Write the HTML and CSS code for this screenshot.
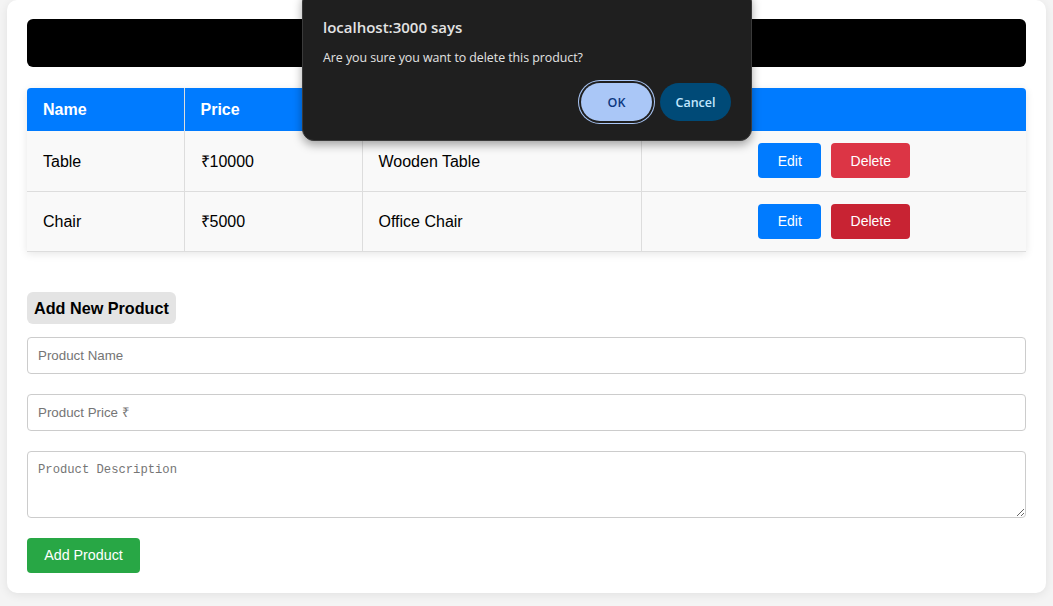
FILE: index.html
```html
<!DOCTYPE html>
<html lang="en">
<head>
<meta charset="utf-8">
<title>Products</title>
<link rel="stylesheet" href="styles.css">
</head>
<body>
<div class="page">
  <div class="container">
    <div class="topbar"></div>
    <table class="products">
      <thead>
        <tr>
          <th class="c-name">Name</th>
          <th class="c-price">Price</th>
          <th class="c-desc">Description</th>
          <th class="c-act">Actions</th>
        </tr>
      </thead>
      <tbody>
        <tr>
          <td>Table</td>
          <td>₹10000</td>
          <td>Wooden Table</td>
          <td class="actions"><button class="btn edit">Edit</button><button class="btn delete">Delete</button></td>
        </tr>
        <tr>
          <td>Chair</td>
          <td>₹5000</td>
          <td>Office Chair</td>
          <td class="actions"><button class="btn edit">Edit</button><button class="btn delete hover">Delete</button></td>
        </tr>
      </tbody>
    </table>

    <div class="form">
      <h2 class="form-title">Add New Product</h2>
      <input class="field" type="text" placeholder="Product Name">
      <input class="field" type="text" placeholder="Product Price ₹">
      <textarea class="field area" placeholder="Product Description"></textarea>
      <div><button class="btn add">Add Product</button></div>
    </div>
  </div>

  <div class="dialog">
    <div class="dlg-title">localhost:3000 says</div>
    <div class="dlg-msg">Are you sure you want to delete this product?</div>
    <div class="dlg-actions">
      <button class="dlg-btn ok">OK</button>
      <button class="dlg-btn cancel">Cancel</button>
    </div>
  </div>
</div>
</body>
</html>
```

FILE: styles.css
```css
* { box-sizing: border-box; }
html, body {
  margin: 0;
  padding: 0;
  background: #f4f4f4;
  font-family: "Liberation Sans", Arial, sans-serif;
}
.page {
  position: relative;
  padding: 0 7px 13px 7px;
}
.container {
  background: #ffffff;
  border-radius: 10px;
  box-shadow: 0 2px 10px rgba(0,0,0,0.08);
  padding: 19px 20px 20px 20px;
  height: 593px;
}
.topbar {
  height: 48px;
  background: #000;
  border-radius: 6px;
}
.products {
  margin-top: 21px;
  width: 100%;
  border-collapse: collapse;
  border-radius: 4px 4px 0 0;
  overflow: hidden;
  box-shadow: 0 2px 8px rgba(0,0,0,0.1);
  font-size: 16px;
}
.products th {
  background: #007bff;
  color: #fff;
  font-weight: bold;
  text-align: left;
  height: 43px;
  padding: 1px 16px 0 16px;
  border-right: 1px solid #ddd;
}
.products th:last-child { border-right: none; }
.c-name { width: 157px; }
.c-price { width: 178px; }
.c-desc { width: 279px; }
.products td {
  background: #f9f9f9;
  color: #000;
  height: 60px;
  line-height: 18px;
  padding: 2px 15px 0 16px;
  border: 1px solid #ddd;
  border-top: none;
}
.products tr td:first-child { border-left: none; }
.products tr td:last-child { border-right: none; }
.products td.actions { text-align: center; padding-top: 0; }
.btn {
  font-family: "Liberation Sans", Arial, sans-serif;
  font-size: 14px;
  color: #fff;
  border: none;
  border-radius: 4px;
  height: 35px;
  padding: 0 20px;
  vertical-align: middle;
}
.edit { background: #007bff; width: 63px; padding: 0; }
.delete { background: #dc3545; width: 79px; padding: 0; margin-left: 10px; }
.delete.hover { background: #c82333; }

.form { margin-top: 40px; }
.form-title {
  display: inline-block;
  margin: 0;
  font-size: 16.2px;
  font-weight: bold;
  background: #e4e4e4;
  border-radius: 6px;
  padding: 7px 7px;
  line-height: 18px;
  color: #000;
}
.field {
  display: block;
  width: 100%;
  height: 37px;
  margin-top: 13px;
  border: 1px solid #ccc;
  border-radius: 4px;
  padding: 0 10px;
  font-family: "Liberation Sans", Arial, sans-serif;
  font-size: 13.33px;
  background: #fff;
}
.field + .field { margin-top: 20px; }
.field::placeholder { color: #757575; }
.area {
  height: 67px;
  padding: 11px 10px;
  font-family: "Liberation Mono", monospace;
  font-size: 12.2px;
  resize: vertical;
}
.add {
  margin-top: 20px;
  background: #28a745;
  width: 113px;
  padding: 0;
  font-size: 14.3px;
}

.dialog {
  position: absolute;
  left: 302px;
  top: -10px;
  width: 450px;
  height: 151px;
  background: #1f1f1f;
  border: 1px solid #3a3a3a;
  border-radius: 12px;
  box-shadow: 0 4px 10px rgba(0,0,0,0.35);
  padding: 26px 20px 0 20px;
  font-family: "Open Sans", "Noto Sans", sans-serif;
  color: #e3e3e3;
}
.dlg-title {
  font-size: 15px;
  font-weight: 600;
  line-height: 20px;
}
.dlg-msg {
  font-size: 12.4px;
  margin-top: 12px;
  line-height: 18px;
  letter-spacing: -0.05px;
}
.dlg-actions {
  display: flex;
  justify-content: flex-end;
  align-items: center;
  gap: 5px;
  margin-top: 16px;
}
.dlg-btn {
  font-family: "Open Sans", "Noto Sans", sans-serif;
  font-size: 12.5px;
  font-weight: 600;
  height: 38px;
  border-radius: 19px;
  border: none;
}
.ok {
  width: 71px;
  margin-right: 3px;
  background: #aac7f7;
  color: #0c3880;
  box-shadow: 0 0 0 2px #1f1f1f, 0 0 0 3px #aac7f7;
}
.cancel {
  width: 71px;
  background: #004a77;
  color: #c2e7ff;
}
```
